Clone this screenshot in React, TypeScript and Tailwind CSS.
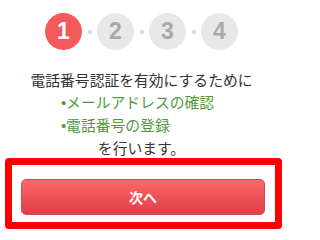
import React from "react";

const Step = ({ n, active }: { n: number; active?: boolean }) => (
  <div
    className={
      "flex h-[37px] w-[37px] items-center justify-center rounded-full text-[23px] font-bold leading-none " +
      (active ? "bg-[#f25a5c] text-white" : "bg-[#e8e8e8] text-[#a9a9a9]")
    }
    style={{ fontFamily: '"Liberation Sans", Arial, sans-serif' }}
  >
    {n}
  </div>
);

const Dot = () => (
  <div className="flex w-[15px] items-center justify-center">
    <div className="h-[4px] w-[4px] rounded-full bg-[#d6d6d6]" />
  </div>
);

export default function App() {
  const jp = { fontFamily: '"Noto Sans CJK JP", "Noto Sans", sans-serif' };
  return (
    <div className="h-[233px] w-[300px] bg-white">
      <div className="flex w-[283px] flex-col items-center pt-[13px]">
        <div className="flex">
          <Step n={1} active />
          <Dot />
          <Step n={2} />
          <Dot />
          <Step n={3} />
          <Dot />
          <Step n={4} />
        </div>
        <div
          className="mt-[19px] flex flex-col items-center text-[14.8px] leading-[22px] text-[#333333]"
          style={jp}
        >
          <div>電話番号認証を有効にするために</div>
          <div className="mr-[8px] flex flex-col text-left text-[#4f9a3f]">
            <div>
              <span style={{ fontFamily: '"Liberation Sans", sans-serif' }}>•</span>
              メールアドレスの確認
            </div>
            <div>
              <span style={{ fontFamily: '"Liberation Sans", sans-serif' }}>•</span>
              電話番号の登録
            </div>
          </div>
          <div>を行います。</div>
        </div>
      </div>
      <div className="ml-[5px] -mt-px w-[277px] rounded-[4px] border-[7px] border-[#ff0000] pb-[7px] pl-[9px] pr-[10px] pt-[14px]">
        <button
          className="flex h-[36px] w-[244px] items-center justify-center rounded-[5px] border border-[#e0454c] bg-gradient-to-b from-[#fa676d] to-[#e23c45] text-[14px] font-bold text-white"
          style={jp}
        >
          次へ
        </button>
      </div>
    </div>
  );
}
